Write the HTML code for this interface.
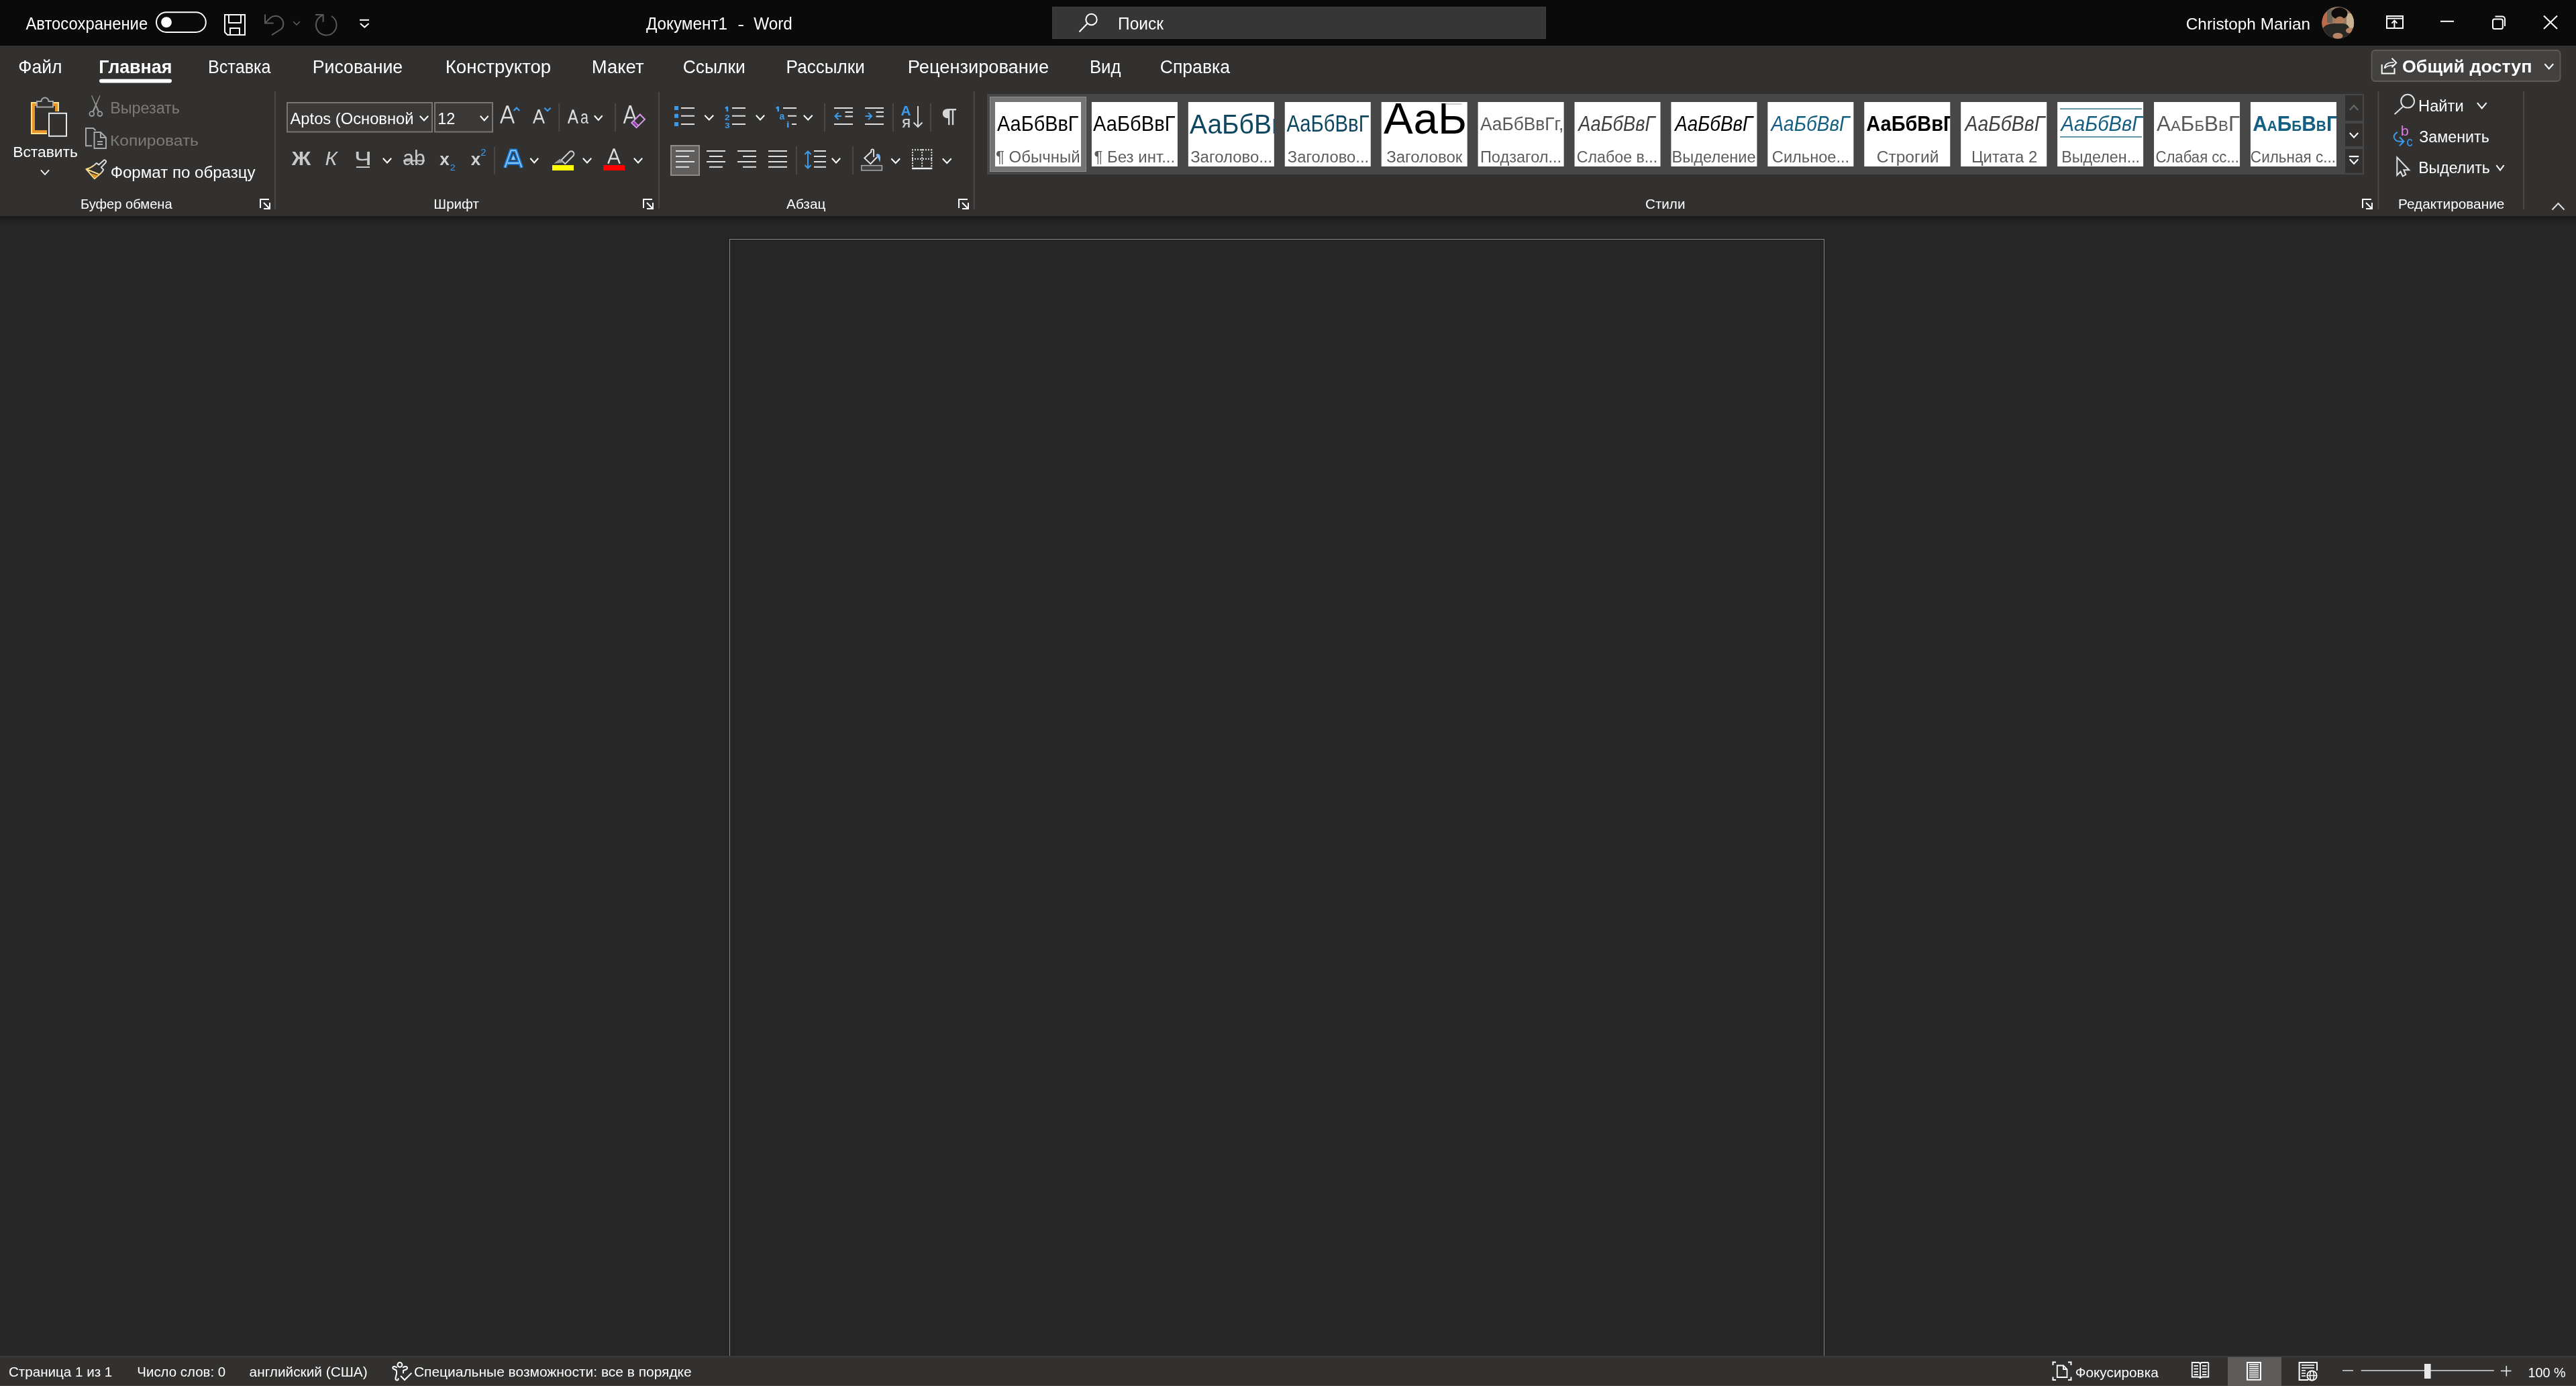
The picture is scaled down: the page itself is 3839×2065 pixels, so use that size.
<!DOCTYPE html>
<html><head><meta charset="utf-8"><title>Документ1 - Word</title>
<style>
html,body{margin:0;padding:0;width:3839px;height:2065px;overflow:hidden;background:#262626;}
svg{display:block;font-family:"Liberation Sans",sans-serif;will-change:transform;}
</style></head><body>
<svg width="3839" height="2065" viewBox="0 0 3839 2065">
<rect x="0" y="0" width="3839" height="2065" fill="#262626" />
<rect x="0" y="0" width="3839" height="68" fill="#0a0a0a" />
<rect x="0" y="68" width="3839" height="254" fill="#323130" />
<defs><linearGradient id="sh" x1="0" y1="0" x2="0" y2="1"><stop offset="0" stop-color="#191919"/><stop offset="1" stop-color="#262626" stop-opacity="0"/></linearGradient></defs>
<rect x="0" y="322" width="3839" height="1" fill="#181818" />
<rect x="0" y="323" width="3839" height="1" fill="#1a1a1a" />
<rect x="0" y="324" width="3839" height="1" fill="#1c1c1c" />
<rect x="0" y="325" width="3839" height="1" fill="#1e1e1e" />
<rect x="0" y="326" width="3839" height="1" fill="#1f1f1f" />
<rect x="0" y="327" width="3839" height="1" fill="#202020" />
<rect x="0" y="328" width="3839" height="1" fill="#212121" />
<rect x="0" y="329" width="3839" height="1" fill="#222222" />
<rect x="0" y="330" width="3839" height="1" fill="#232323" />
<rect x="0" y="331" width="3839" height="1" fill="#232323" />
<rect x="0" y="332" width="3839" height="1" fill="#242424" />
<rect x="0" y="333" width="3839" height="1" fill="#252525" />
<rect x="0" y="334" width="3839" height="1" fill="#252525" />
<rect x="1087.5" y="356.5" width="1631" height="1700" fill="none" stroke="#8c8c8c" stroke-width="1"/>
<rect x="1086.5" y="355.5" width="1633" height="1700" fill="none" stroke="#1e1e1e" stroke-width="1"/>
<rect x="1088.5" y="357.5" width="1629" height="1700" fill="none" stroke="#202020" stroke-width="1"/>
<rect x="0" y="2020" width="3839" height="45" fill="#323130" />
<text transform="translate(38.40,43.60) scale(0.9482,1)" font-size="25.15" fill="#fff" >Автосохранение</text>
<rect x="233" y="18.3" width="73.8" height="29.7" rx="14.85" fill="none" stroke="#fff" stroke-width="2"/>
<circle cx="248" cy="33.1" r="7.9" fill="#fff"/>
<path d="M335 22 H365 V52 H339 L335 48 Z" stroke="#ffffff" stroke-width="2" fill="none" />
<path d="M341 22 V34 H359 V22" stroke="#ffffff" stroke-width="2" fill="none" />
<path d="M343 52 V42 H357 V52" stroke="#ffffff" stroke-width="2" fill="none" />
<path d="M395 21.5 V34.4 H407.7" stroke="#5a5a5a" stroke-width="2" fill="none" />
<path d="M395.5 34 L403 26.5 A 11.7 11.7 0 0 1 419.5 43 L405 52.2" stroke="#5a5a5a" stroke-width="2" fill="none" />
<path d="M437 32 L442 37 L447 32" stroke="#5a5a5a" stroke-width="1.6" fill="none" />
<path d="M470 22 H481.6 V32.7" stroke="#5a5a5a" stroke-width="2" fill="none" />
<path d="M494 24 A 15.3 15.3 0 1 1 480.5 23" stroke="#5a5a5a" stroke-width="2" fill="none" />
<path d="M536 29.8 H550" stroke="#ffffff" stroke-width="2" fill="none" />
<path d="M537 35 L543.3 40.6 L549.6 35" stroke="#ffffff" stroke-width="2" fill="none" />
<text transform="translate(962.88,44.40) scale(0.9717,1)" font-size="25.00" fill="#fff" >Документ1</text>
<rect x="1100.6" y="37" width="7.2" height="2" fill="#fff" />
<text transform="translate(1123.18,44.40) scale(0.9722,1)" font-size="25.00" fill="#fff" >Word</text>
<rect x="1568.5" y="10.5" width="735" height="47" fill="#363636" stroke="#3f3f3f" stroke-width="1"/>
<circle cx="1626.5" cy="29" r="8.2" fill="none" stroke="#fff" stroke-width="2"/>
<path d="M1620.5 35 L1608.5 47.5" stroke="#ffffff" stroke-width="2" fill="none" />
<text transform="translate(1666.04,43.50) scale(0.9853,1)" font-size="24.85" fill="#fff" >Поиск</text>
<text transform="translate(3257.78,44.00) scale(0.9848,1)" font-size="24.71" fill="#fff" >Christoph Marian</text>
<defs><clipPath id="avc"><circle cx="3484.25" cy="33.95" r="23.9"/></clipPath></defs>
<g clip-path="url(#avc)">
<rect x="3460" y="9" width="49" height="50" fill="#9a7a60" />
<rect x="3460" y="9" width="12" height="50" fill="#c06a4a"/>
<rect x="3497" y="20" width="13" height="22" fill="#c8b090"/>
<rect x="3468" y="14" width="8" height="20" fill="#6a6456"/>
<ellipse cx="3486.5" cy="20" rx="12" ry="9" fill="#0e0c0b"/>
<ellipse cx="3487" cy="31" rx="7" ry="6.5" fill="#b27c5c"/>
<path d="M3460 44 Q3466 35 3478 35 H3493 Q3500 36 3502 44 V60 H3460 Z" fill="#282925"/>
<ellipse cx="3484" cy="53.5" rx="7.5" ry="4.5" fill="#b88464"/>
<ellipse cx="3501" cy="45.5" rx="5" ry="4" fill="#b88464"/>
</g>
<path d="M3557 24 H3581 V42 H3557 Z" stroke="#ffffff" stroke-width="2" fill="none" />
<path d="M3557 27.5 H3581" stroke="#ffffff" stroke-width="2" fill="none" />
<path d="M3568.4 30.5 V42" stroke="#ffffff" stroke-width="2" fill="none" />
<path d="M3564.4 34.6 L3568.4 30.6 L3572.4 34.6" stroke="#ffffff" stroke-width="2" fill="none" />
<path d="M3637 31.8 H3657" stroke="#ffffff" stroke-width="2" fill="none" />
<rect x="3715" y="28.4" width="14.8" height="14.6" rx="2.5" fill="none" stroke="#fff" stroke-width="2"/>
<path d="M3718.5 24.5 H3729 A4 4 0 0 1 3733 28.5 V39" stroke="#ffffff" stroke-width="2" fill="none" />
<path d="M3791 23.5 L3811 43 M3811 23.5 L3791 43" stroke="#ffffff" stroke-width="2" fill="none" />
<text transform="translate(27.24,109.00) scale(0.9599,1)" font-size="27.62" fill="#fff" >Файл</text>
<text transform="translate(147.26,109.00) scale(0.9717,1)" font-size="27.62" fill="#fff" font-weight="bold" >Главная</text>
<rect x="148" y="117.8" width="108" height="5.6" rx="2.8" fill="#fff"/>
<text transform="translate(309.98,109.00) scale(0.9125,1)" font-size="27.62" fill="#fff" >Вставка</text>
<text transform="translate(465.66,109.00) scale(0.9676,1)" font-size="27.62" fill="#fff" >Рисование</text>
<text transform="translate(663.79,109.00) scale(0.9994,1)" font-size="27.62" fill="#fff" >Конструктор</text>
<text transform="translate(881.80,109.00) scale(0.9948,1)" font-size="27.62" fill="#fff" >Макет</text>
<text transform="translate(1017.68,109.00) scale(0.9585,1)" font-size="27.62" fill="#fff" >Ссылки</text>
<text transform="translate(1171.61,109.00) scale(0.9453,1)" font-size="27.62" fill="#fff" >Рассылки</text>
<text transform="translate(1352.82,109.00) scale(0.9869,1)" font-size="27.62" fill="#fff" >Рецензирование</text>
<text transform="translate(1623.94,109.00) scale(0.9317,1)" font-size="27.62" fill="#fff" >Вид</text>
<text transform="translate(1728.67,109.00) scale(0.9637,1)" font-size="27.62" fill="#fff" >Справка</text>
<path d="M46 152 H88 V166 H82 V158 H52 V194 H70 V200 H46 Z" fill="#ffe08a"/>
<path d="M48 154 H86 V166 H82 V158 H52 V194 H70 V198 H48 Z" fill="#e8952a"/>
<path d="M55 159.5 V151 H61.5 A5.5 5.5 0 0 1 72.5 151 H79 V159.5 Z" stroke="#a8a8a8" stroke-width="2" fill="#323130" />
<rect x="73" y="168.8" width="26" height="34" fill="#323130" stroke="#e8e8e8" stroke-width="2"/>
<text transform="translate(19.17,233.50) scale(0.9935,1)" font-size="22.97" fill="#fff" >Вставить</text>
<path d="M61.5 254 L67.0 260 L72.5 254" stroke="#fff" stroke-width="1.8" fill="none" stroke-linecap="square"/>
<path d="M136.6 142.3 L147.6 165.5 L146 166.3 Z M149 142.3 L138 165.5 L139.6 166.3 Z" fill="#9a9a9a" stroke="#9a9a9a" stroke-width="0.8" stroke-linejoin="round"/>
<circle cx="136.8" cy="169.6" r="3.4" fill="none" stroke="#9a9a9a" stroke-width="1.8"/>
<circle cx="148.9" cy="169.6" r="3.4" fill="none" stroke="#9a9a9a" stroke-width="1.8"/>
<text transform="translate(164.13,169.00) scale(0.9918,1)" font-size="23.55" fill="#7c7b7a" >Вырезать</text>
<path d="M137 217.3 H128 V191 H139 L142.5 194.5" stroke="#a8a8a8" stroke-width="2" fill="none" />
<path d="M140.5 221 V197 H150 L158 205 V221 Z M150 197 V205 H158" stroke="#a8a8a8" stroke-width="2" fill="none" />
<path d="M145 211 H153 M145 215 H153" stroke="#a8a8a8" stroke-width="1.8" fill="none" />
<text transform="translate(164.04,216.70) scale(1.0737,1)" font-size="22.82" fill="#7c7b7a" >Копировать</text>
<path d="M140.6 246 L143.2 243.4 Q143.8 242.9 144.4 243.4 L147.2 245.4 L154.6 238.9 Q156.2 237.6 157.6 239.4 Q158.6 240.9 157.5 242.2 L150.8 249.4 L153.8 252.4 Q154.3 253 153.8 253.6 L151.5 256.9" stroke="#dcdcdc" stroke-width="2" fill="none" stroke-linejoin="round"/>
<path d="M151.5 256.9 L140.9 266.3 L128.4 251.9 Q134.5 250.8 140.6 246 M128.4 251.9 L147 259.5" stroke="#f7dc8c" stroke-width="2" fill="none" stroke-linejoin="round"/>
<path d="M135.5 258 L146.3 261.4 L141 265.2 Z" fill="#e3901f"/>
<text transform="translate(164.67,265.00) scale(0.9752,1)" font-size="24.71" fill="#fff" >Формат по образцу</text>
<text transform="translate(119.89,311.00) scale(0.9762,1)" font-size="20.64" fill="#fff" >Буфер обмена</text>
<path d="M388 310 V297 H401 M393 302 L401.5 310.5 M402 302 V311 H393" stroke="#fff" stroke-width="2" fill="none" />
<rect x="409.0" y="136.5" width="2" height="175.0" fill="#4a4846" />
<rect x="428" y="153" width="216" height="43.5" fill="#3a3938" stroke="#777675" stroke-width="2"/>
<text transform="translate(432.50,184.70) scale(0.9962,1)" font-size="23.84" fill="#fff" >Aptos (Основной</text>
<path d="M626.5 173.5 L632.0 179.5 L637.5 173.5" stroke="#fff" stroke-width="2" fill="none" stroke-linecap="square"/>
<rect x="648" y="153" width="86" height="43.5" fill="#3a3938" stroke="#777675" stroke-width="2"/>
<text transform="translate(652.14,184.70) scale(0.9838,1)" font-size="23.84" fill="#fff" >12</text>
<path d="M716.5 173.5 L721.75 179.5 L727 173.5" stroke="#fff" stroke-width="2" fill="none" stroke-linecap="square"/>
<path d="M746.3 183.8 L755.5 158.5 H756.8 L765.7 183.8 M749.5 175.2 H762.5" stroke="#dcdcdc" stroke-width="2.6" fill="none" />
<path d="M765.5 165 L769.9 160.6 L774.3 165" stroke="#3d9be9" stroke-width="2.2" fill="none" />
<path d="M795.2 183.8 L802.5 164.3 H803.5 L810.8 183.8 M797.8 177 H808.2" stroke="#dcdcdc" stroke-width="2.4" fill="none" />
<path d="M811.4 160.7 L816 165.3 L820.6 160.7" stroke="#3d9be9" stroke-width="2.2" fill="none" />
<rect x="832.3" y="154" width="2" height="42" fill="#4a4846" />
<path d="M847 183.8 L853.5 164.5 H854.3 L860.8 183.8 M849.3 177 H858.5" stroke="#dcdcdc" stroke-width="2.4" fill="none" />
<text transform="translate(865.04,184.00) scale(0.7838,1)" font-size="27.50" fill="#dcdcdc" >a</text>
<path d="M886.5 173 L891.75 179 L897 173" stroke="#fff" stroke-width="2" fill="none" stroke-linecap="square"/>
<rect x="916.0" y="154" width="2" height="42" fill="#4a4846" />
<path d="M930 183.8 L938.5 158.3 H939.8 L946.5 178 M933 175.2 H943" stroke="#dcdcdc" stroke-width="2.6" fill="none" />
<path d="M941.3 183 L953.8 170.5 L961 177.7 L948.5 190.2 Z" fill="none" stroke="#d89ae6" stroke-width="2"/>
<path d="M944.2 180.3 L951.3 187.4" stroke="#d89ae6" stroke-width="2"/>
<path d="M942.8 183 L944.8 181 L949.8 186 L947.8 188 Z" fill="#9b3fbf"/>
<rect x="981.0" y="136.8" width="2" height="174.2" fill="#4a4846" />
<text transform="translate(434.80,246.40) scale(1.0446,1)" font-size="30.09" fill="#c8c8c8" font-weight="bold" >Ж</text>
<text transform="translate(484.48,246.40) scale(1.0218,1)" font-size="30.09" fill="#c8c8c8" font-style="italic" >К</text>
<text transform="translate(527.83,246.40) scale(1.3163,1)" font-size="30.09" fill="#c8c8c8" >Ч</text>
<rect x="531" y="248" width="20" height="2" fill="#c8c8c8" />
<path d="M571.5 236.5 L577.0 242.5 L582.5 236.5" stroke="#fff" stroke-width="2" fill="none" stroke-linecap="square"/>
<text transform="translate(600.30,246.40) scale(0.9631,1)" font-size="31.25" fill="#c8c8c8" >ab</text>
<rect x="601" y="238.5" width="32" height="2" fill="#c8c8c8" />
<text transform="translate(655.14,246.40) scale(1.0444,1)" font-size="25.00" fill="#d0d0d0" font-weight="bold" >x</text>
<text transform="translate(670.79,253.80) scale(1.0683,1)" font-size="13.37" fill="#3d9be9" >2</text>
<text transform="translate(701.74,246.40) scale(1.0370,1)" font-size="25.00" fill="#d0d0d0" font-weight="bold" >x</text>
<text transform="translate(716.26,232.30) scale(1.0338,1)" font-size="14.24" fill="#3d9be9" >2</text>
<rect x="736.0" y="219" width="2" height="40.5" fill="#4a4846" />
<path d="M752.5 249.8 L761.5 224.2 H768.5 L777.5 249.8 M756.5 243 H773.5" stroke="#1a78d0" stroke-width="5.5" fill="none" stroke-linejoin="miter"/>
<path d="M752.5 249.8 L761.5 224.2 H768.5 L777.5 249.8 M756.5 243 H773.5" stroke="#8cc8f5" stroke-width="1.8" fill="none" stroke-linejoin="miter"/>
<path d="M765 229.5 L768.8 238.5 H761.2 Z" fill="#8cc8f5" stroke="#1a78d0" stroke-width="1.2"/>
<path d="M791 236.5 L796.25 242.5 L801.5 236.5" stroke="#fff" stroke-width="2" fill="none" stroke-linecap="square"/>
<path d="M836.5 238.5 L848.5 226.5 A4 4 0 0 1 854.2 232.2 L842.2 244.2 Z" stroke="#d0d0d0" stroke-width="2" fill="none" />
<path d="M825.3 243.8 L834.5 236.5 L840 242 Z" fill="#9a9a9a"/>
<rect x="823" y="246" width="32" height="8" fill="#ffff00" />
<path d="M869.5 236.5 L875.0 242.5 L880.5 236.5" stroke="#fff" stroke-width="2" fill="none" stroke-linecap="square"/>
<path d="M906.3 243.7 L914.5 222.5 H915.5 L923.7 243.7 M909 236.5 H921" stroke="#dcdcdc" stroke-width="2.4" fill="none" />
<rect x="899" y="246" width="32" height="8" fill="#ff0000" />
<path d="M945.5 236.5 L951.0 242.5 L956.5 236.5" stroke="#fff" stroke-width="2" fill="none" stroke-linecap="square"/>
<text transform="translate(646.36,311.00) scale(0.9810,1)" font-size="20.93" fill="#fff" >Шрифт</text>
<path d="M959 310 V297 H972 M964 302 L972.5 310.5 M973 302 V311 H964" stroke="#fff" stroke-width="2" fill="none" />
<rect x="1005" y="158" width="6" height="6" fill="#3d9be9" />
<rect x="1015" y="160" width="20" height="2" fill="#e0e0e0" />
<rect x="1091" y="160" width="20" height="2" fill="#e0e0e0" />
<rect x="1005" y="169.7" width="6" height="6" fill="#3d9be9" />
<rect x="1015" y="171.7" width="20" height="2" fill="#e0e0e0" />
<rect x="1091" y="171.7" width="20" height="2" fill="#e0e0e0" />
<rect x="1005" y="182" width="6" height="6" fill="#3d9be9" />
<rect x="1015" y="184" width="20" height="2" fill="#e0e0e0" />
<rect x="1091" y="184" width="20" height="2" fill="#e0e0e0" />
<path d="M1051 172.5 L1056.75 178.5 L1062.5 172.5" stroke="#fff" stroke-width="2" fill="none" stroke-linecap="square"/>
<path d="M1083.9 166.2 V159.2 M1084.6 159 L1080.9 161.4" stroke="#3d9be9" stroke-width="2.6" fill="none" />
<text transform="translate(1080.03,178.50) scale(1.2940,1)" font-size="10.47" fill="#3d9be9" font-weight="bold" >2</text>
<text transform="translate(1080.17,190.50) scale(1.2548,1)" font-size="10.47" fill="#3d9be9" font-weight="bold" >3</text>
<path d="M1127.5 172.5 L1133.0 178.5 L1138.5 172.5" stroke="#fff" stroke-width="2" fill="none" stroke-linecap="square"/>
<rect x="1167" y="160" width="20" height="2" fill="#e0e0e0" />
<rect x="1174" y="171.7" width="13" height="2" fill="#e0e0e0" />
<rect x="1180" y="184" width="7" height="2" fill="#e0e0e0" />
<path d="M1159.7 166.2 V159.2 M1160.4 159 L1156.7 161.4" stroke="#3d9be9" stroke-width="2.6" fill="none" />
<text transform="translate(1161.58,177.80) scale(0.9186,1)" font-size="15.26" fill="#3d9be9" font-weight="bold" >a</text>
<text transform="translate(1171.75,189.80) scale(1.3651,1)" font-size="13.08" fill="#3d9be9" font-weight="bold" >i</text>
<path d="M1198.5 172.5 L1204.25 178.5 L1210 172.5" stroke="#fff" stroke-width="2" fill="none" stroke-linecap="square"/>
<rect x="1228.0" y="154" width="2" height="42" fill="#4a4846" />
<rect x="1243" y="160" width="28" height="2" fill="#e0e0e0" />
<rect x="1259.5" y="166" width="11.5" height="2" fill="#e0e0e0" />
<rect x="1259.5" y="172.5" width="11.5" height="2" fill="#e0e0e0" />
<rect x="1243" y="184" width="28" height="2" fill="#e0e0e0" />
<path d="M1254 173 H1244.5 M1249.5 168 L1244.5 173 L1249.5 178" stroke="#3d9be9" stroke-width="2" fill="none" />
<rect x="1289" y="160" width="28" height="2" fill="#e0e0e0" />
<rect x="1305.5" y="166" width="11.5" height="2" fill="#e0e0e0" />
<rect x="1305.5" y="172.5" width="11.5" height="2" fill="#e0e0e0" />
<rect x="1289" y="184" width="28" height="2" fill="#e0e0e0" />
<path d="M1289.5 173 H1299 M1294 168 L1299 173 L1294 178" stroke="#3d9be9" stroke-width="2" fill="none" />
<rect x="1330.0" y="154" width="2" height="42" fill="#4a4846" />
<text transform="translate(1342.48,171.70) scale(1.0494,1)" font-size="19.91" fill="#3d9be9" font-weight="bold" >A</text>
<text transform="translate(1344.15,189.80) scale(0.9183,1)" font-size="19.19" fill="#c8c8c8" font-weight="bold" >Я</text>
<path d="M1368 158 V189 M1361.5 182.5 L1368 189 L1374.5 182.5" stroke="#d8d8d8" stroke-width="2" fill="none" />
<rect x="1386.0" y="154" width="2" height="42" fill="#4a4846" />
<path d="M1413.5 162 H1425 V164.6 H1421.2 V186.2 H1418.8 V164.6 H1415.4 V186.2 H1413 V176.3 Q1404.8 176 1404.8 169 Q1404.8 162 1413.5 162 Z" fill="#d6d6d6"/>
<rect x="1000" y="217" width="42" height="44" fill="#5f5e5d" stroke="#8e8d8c" stroke-width="2"/>
<rect x="1007" y="224" width="28" height="2" fill="#e0e0e0" />
<rect x="1007" y="232" width="20" height="2" fill="#e0e0e0" />
<rect x="1007" y="240" width="28" height="2" fill="#e0e0e0" />
<rect x="1007" y="247.8" width="20" height="2" fill="#e0e0e0" />
<rect x="1053" y="224" width="28" height="2" fill="#e0e0e0" />
<rect x="1057" y="232" width="20" height="2" fill="#e0e0e0" />
<rect x="1053" y="240" width="28" height="2" fill="#e0e0e0" />
<rect x="1057" y="247.8" width="20" height="2" fill="#e0e0e0" />
<rect x="1099" y="224" width="28" height="2" fill="#e0e0e0" />
<rect x="1107" y="232" width="20" height="2" fill="#e0e0e0" />
<rect x="1099" y="240" width="28" height="2" fill="#e0e0e0" />
<rect x="1107" y="247.8" width="20" height="2" fill="#e0e0e0" />
<rect x="1145" y="224" width="28" height="2" fill="#e0e0e0" />
<rect x="1145" y="232" width="28" height="2" fill="#e0e0e0" />
<rect x="1145" y="240" width="28" height="2" fill="#e0e0e0" />
<rect x="1145" y="247.8" width="28" height="2" fill="#e0e0e0" />
<rect x="1186.0" y="218" width="2" height="42" fill="#4a4846" />
<path d="M1204 226 V250 M1199.5 230 L1204 225.5 L1208.5 230 M1199.5 246 L1204 250.5 L1208.5 246" stroke="#3d9be9" stroke-width="2" fill="none" />
<rect x="1213" y="224" width="18" height="2" fill="#e0e0e0" />
<rect x="1213" y="232" width="18" height="2" fill="#e0e0e0" />
<rect x="1213" y="240" width="18" height="2" fill="#e0e0e0" />
<rect x="1213" y="247.8" width="18" height="2" fill="#e0e0e0" />
<path d="M1240.5 236.5 L1246.0 242.5 L1251.5 236.5" stroke="#fff" stroke-width="2" fill="none" stroke-linecap="square"/>
<rect x="1270.0" y="218" width="2" height="42" fill="#4a4846" />
<path d="M1298.3 226.3 L1288.3 235.6 L1297.4 244.2 L1307.2 234" stroke="#e6e6e6" stroke-width="1.9" fill="none" />
<path d="M1298.3 226.5 V224.3 A1.9 1.9 0 0 1 1302.1 224.3 V233.2" stroke="#e6e6e6" stroke-width="1.9" fill="none" stroke-linecap="round"/>
<path d="M1305.3 230.5 Q1308 228.2 1310.8 230.5 Q1313 233 1311.2 242.3 Q1309.5 236 1307 233.5 Z" fill="#7cbcf0"/>
<rect x="1283.8" y="246.6" width="30.6" height="7.2" fill="#404040" stroke="#b0b0b0" stroke-width="1.4"/>
<path d="M1329 237 L1334.75 243 L1340.5 237" stroke="#fff" stroke-width="2" fill="none" stroke-linecap="square"/>
<path d="M1359.0 222.3h1.9v1.9h-1.9z M1363.0 222.3h1.9v1.9h-1.9z M1367.0 222.3h1.9v1.9h-1.9z M1371.0 222.3h1.9v1.9h-1.9z M1375.0 222.3h1.9v1.9h-1.9z M1379.0 222.3h1.9v1.9h-1.9z M1383.0 222.3h1.9v1.9h-1.9z M1387.0 222.3h1.9v1.9h-1.9z M1359.0 235.8h1.9v1.9h-1.9z M1363.0 235.8h1.9v1.9h-1.9z M1367.0 235.8h1.9v1.9h-1.9z M1371.0 235.8h1.9v1.9h-1.9z M1375.0 235.8h1.9v1.9h-1.9z M1379.0 235.8h1.9v1.9h-1.9z M1383.0 235.8h1.9v1.9h-1.9z M1387.0 235.8h1.9v1.9h-1.9z M1359.0 222.3h1.9v1.9h-1.9z M1359.0 226.3h1.9v1.9h-1.9z M1359.0 230.3h1.9v1.9h-1.9z M1359.0 234.3h1.9v1.9h-1.9z M1359.0 238.3h1.9v1.9h-1.9z M1359.0 242.3h1.9v1.9h-1.9z M1359.0 246.3h1.9v1.9h-1.9z M1373.2 222.3h1.9v1.9h-1.9z M1373.2 226.3h1.9v1.9h-1.9z M1373.2 230.3h1.9v1.9h-1.9z M1373.2 234.3h1.9v1.9h-1.9z M1373.2 238.3h1.9v1.9h-1.9z M1373.2 242.3h1.9v1.9h-1.9z M1373.2 246.3h1.9v1.9h-1.9z M1387.4 222.3h1.9v1.9h-1.9z M1387.4 226.3h1.9v1.9h-1.9z M1387.4 230.3h1.9v1.9h-1.9z M1387.4 234.3h1.9v1.9h-1.9z M1387.4 238.3h1.9v1.9h-1.9z M1387.4 242.3h1.9v1.9h-1.9z M1387.4 246.3h1.9v1.9h-1.9z" fill="#f0f0f0"/>
<rect x="1359" y="249.8" width="30.3" height="2.4" fill="#f4f4f4" />
<path d="M1405.5 237 L1411.25 243 L1417 237" stroke="#fff" stroke-width="2" fill="none" stroke-linecap="square"/>
<text transform="translate(1172.00,311.00) scale(0.9882,1)" font-size="21.08" fill="#fff" >Абзац</text>
<path d="M1429 310 V297 H1442 M1434 302 L1442.5 310.5 M1443 302 V311 H1434" stroke="#fff" stroke-width="2" fill="none" />
<rect x="1450.7" y="136" width="2" height="175.5" fill="#4a4846" />
<rect x="3543.5" y="136" width="2" height="176" fill="#4a4846" />
<circle cx="3588.1" cy="150.7" r="9.9" fill="none" stroke="#e0e0e0" stroke-width="2"/>
<path d="M3581 159 L3568.6 170.2" stroke="#e0e0e0" stroke-width="2" fill="none" />
<text transform="translate(3604.11,166.00) scale(1.0174,1)" font-size="23.26" fill="#fff" >Найти</text>
<path d="M3692.5 154 L3698.75 161.5 L3705 154" stroke="#fff" stroke-width="2" fill="none" stroke-linecap="square"/>
<text transform="translate(3577.78,201.80) scale(1.0333,1)" font-size="21.08" fill="#dc78e0" >b</text>
<text transform="translate(3586.46,217.70) scale(0.8726,1)" font-size="21.08" fill="#3d9be9" >c</text>
<path d="M3573 196.8 Q3566.5 200.5 3568 205.5 Q3570 210.7 3576 210.7 H3582 M3576 204.3 L3582.5 210.7 L3576 217.3" stroke="#3d9be9" stroke-width="2" fill="none" />
<text transform="translate(3605.18,212.00) scale(0.9836,1)" font-size="23.69" fill="#fff" >Заменить</text>
<path d="M3572.3 234.5 V261 L3577.6 255.5 L3580.8 262.5 L3585.3 260 L3582.3 253.2 H3590.3 Z" stroke="#e0e0e0" stroke-width="2" fill="none" stroke-linejoin="miter"/>
<text transform="translate(3604.15,258.00) scale(0.9777,1)" font-size="23.69" fill="#fff" >Выделить</text>
<path d="M3721 247 L3726.0 253.5 L3731 247" stroke="#fff" stroke-width="2" fill="none" stroke-linecap="square"/>
<text transform="translate(3574.04,310.60) scale(0.9863,1)" font-size="21.08" fill="#fff" >Редактирование</text>
<rect x="3760.0" y="136" width="2" height="176" fill="#4a4846" />
<path d="M3803.5 312.5 L3812.5 303 L3821.5 312.5" stroke="#e0e0e0" stroke-width="2" fill="none" />
<rect x="3534.5" y="75" width="281" height="46" rx="5" fill="#434241" stroke="#5c5b5a" stroke-width="1.8"/>
<path d="M3549.7 96 V109.5 H3568.5 V101.5" stroke="#fff" stroke-width="2" fill="none" />
<path d="M3553.5 101.8 Q3554.5 95 3561 93.5 Q3564 92.8 3567.5 93 M3553.5 101.8 Q3557 97.5 3567.5 97.3" stroke="#fff" stroke-width="1.6" fill="none" />
<path d="M3564.5 86.8 L3571.2 93.6 L3564.5 100.3" stroke="#fff" stroke-width="2" fill="none" />
<text transform="translate(3579.93,108.00) scale(1.0093,1)" font-size="26.60" fill="#fff" font-weight="bold" >Общий доступ</text>
<path d="M3793 96 L3798.75 102.5 L3804.5 96" stroke="#fff" stroke-width="2" fill="none" stroke-linecap="square"/>
<rect x="1471" y="140" width="2052" height="120" fill="#474747" />
<rect x="1475.5" y="144.5" width="143" height="111" fill="#747474" stroke="#8e8e8e" stroke-width="1"/>
<defs>
<clipPath id="tc0"><rect x="1483.00" y="152" width="128" height="96"/></clipPath>
<clipPath id="tc1"><rect x="1626.92" y="152" width="128" height="96"/></clipPath>
<clipPath id="tc2"><rect x="1770.84" y="152" width="128" height="96"/></clipPath>
<clipPath id="tc3"><rect x="1914.76" y="152" width="128" height="96"/></clipPath>
<clipPath id="tc4"><rect x="2058.68" y="152" width="128" height="96"/></clipPath>
<clipPath id="tc5"><rect x="2202.60" y="152" width="128" height="96"/></clipPath>
<clipPath id="tc6"><rect x="2346.52" y="152" width="128" height="96"/></clipPath>
<clipPath id="tc7"><rect x="2490.44" y="152" width="128" height="96"/></clipPath>
<clipPath id="tc8"><rect x="2634.36" y="152" width="128" height="96"/></clipPath>
<clipPath id="tc9"><rect x="2778.28" y="152" width="128" height="96"/></clipPath>
<clipPath id="tc10"><rect x="2922.20" y="152" width="128" height="96"/></clipPath>
<clipPath id="tc11"><rect x="3066.12" y="152" width="128" height="96"/></clipPath>
<clipPath id="tc12"><rect x="3210.04" y="152" width="128" height="96"/></clipPath>
<clipPath id="tc13"><rect x="3353.96" y="152" width="128" height="96"/></clipPath>
</defs>
<rect x="1483.00" y="152" width="128" height="96" fill="#ffffff" />
<rect x="1626.92" y="152" width="128" height="96" fill="#ffffff" />
<rect x="1770.84" y="152" width="128" height="96" fill="#ffffff" />
<rect x="1914.76" y="152" width="128" height="96" fill="#ffffff" />
<rect x="2058.68" y="152" width="128" height="96" fill="#ffffff" />
<rect x="2202.60" y="152" width="128" height="96" fill="#ffffff" />
<rect x="2346.52" y="152" width="128" height="96" fill="#ffffff" />
<rect x="2490.44" y="152" width="128" height="96" fill="#ffffff" />
<rect x="2634.36" y="152" width="128" height="96" fill="#ffffff" />
<rect x="2778.28" y="152" width="128" height="96" fill="#ffffff" />
<rect x="2922.20" y="152" width="128" height="96" fill="#ffffff" />
<rect x="3066.12" y="152" width="128" height="96" fill="#ffffff" />
<rect x="3210.04" y="152" width="128" height="96" fill="#ffffff" />
<rect x="3353.96" y="152" width="128" height="96" fill="#ffffff" />
<g clip-path="url(#tc0)">
<text transform="translate(1484.04,242.00) scale(1.0007,1)" font-size="23.98" fill="#5c5c5c" >¶ Обычный</text>
</g>
<g clip-path="url(#tc1)">
<text transform="translate(1630.54,242.00) scale(0.9999,1)" font-size="23.98" fill="#5c5c5c" >¶ Без инт...</text>
</g>
<g clip-path="url(#tc2)">
<text transform="translate(1774.16,242.00) scale(0.9984,1)" font-size="23.98" fill="#5c5c5c" >Заголово...</text>
</g>
<g clip-path="url(#tc3)">
<text transform="translate(1918.87,242.00) scale(0.9925,1)" font-size="23.98" fill="#5c5c5c" >Заголово...</text>
</g>
<g clip-path="url(#tc4)">
<text transform="translate(2066.16,242.00) scale(1.0045,1)" font-size="23.98" fill="#5c5c5c" >Заголовок</text>
</g>
<g clip-path="url(#tc5)">
<text transform="translate(2205.91,242.00) scale(0.9833,1)" font-size="23.98" fill="#5c5c5c" >Подзагол...</text>
</g>
<g clip-path="url(#tc6)">
<text transform="translate(2349.84,242.00) scale(0.9670,1)" font-size="23.98" fill="#5c5c5c" >Слабое в...</text>
</g>
<g clip-path="url(#tc7)">
<text transform="translate(2491.61,242.00) scale(0.9846,1)" font-size="23.98" fill="#5c5c5c" >Выделение</text>
</g>
<g clip-path="url(#tc8)">
<text transform="translate(2640.82,242.00) scale(0.9852,1)" font-size="23.98" fill="#5c5c5c" >Сильное...</text>
</g>
<g clip-path="url(#tc9)">
<text transform="translate(2796.77,242.00) scale(1.0233,1)" font-size="23.98" fill="#5c5c5c" >Строгий</text>
</g>
<g clip-path="url(#tc10)">
<text transform="translate(2937.89,242.00) scale(0.9961,1)" font-size="23.98" fill="#5c5c5c" >Цитата 2</text>
</g>
<g clip-path="url(#tc11)">
<text transform="translate(3072.13,242.00) scale(0.9725,1)" font-size="23.98" fill="#5c5c5c" >Выделен...</text>
</g>
<g clip-path="url(#tc12)">
<text transform="translate(3212.39,242.00) scale(0.9245,1)" font-size="23.98" fill="#5c5c5c" >Слабая сс...</text>
</g>
<g clip-path="url(#tc13)">
<text transform="translate(3353.87,242.00) scale(0.9392,1)" font-size="23.98" fill="#5c5c5c" >Сильная с...</text>
</g>
<g clip-path="url(#tc0)">
<text transform="translate(1486.00,195.00) scale(0.9472,1)" font-size="30.52" fill="#000" >АаБбВвГ</text>
</g>
<g clip-path="url(#tc1)">
<text transform="translate(1629.00,195.00) scale(0.9551,1)" font-size="30.52" fill="#000" >АаБбВвГ</text>
</g>
<g clip-path="url(#tc2)">
<text transform="translate(1773.00,199.00) scale(0.9405,1)" font-size="41.42" fill="#0f4761" >АаБбВвГ</text>
</g>
<g clip-path="url(#tc3)">
<text transform="translate(1917.50,196.00) scale(0.8570,1)" font-size="34.16" fill="#0f4761" >АаБбВвГ</text>
</g>
<g clip-path="url(#tc4)">
<text transform="translate(2062.00,199.00) scale(1.0266,1)" font-size="63.95" fill="#000" >АаЬ</text>
</g>
<rect x="2153.6" y="154.5" width="25" height="1" fill="#9a9a9a"/>
<g clip-path="url(#tc5)">
<text transform="translate(2206.00,194.20) scale(0.9239,1)" font-size="28.49" fill="#595959" >АаБбВвГг,</text>
</g>
<g clip-path="url(#tc6)">
<text transform="translate(2352.37,195.00) scale(0.8956,1)" font-size="30.52" fill="#404040" font-style="italic" >АаБбВвГ</text>
</g>
<g clip-path="url(#tc7)">
<text transform="translate(2496.19,195.00) scale(0.9124,1)" font-size="30.52" fill="#000" font-style="italic" >АаБбВвГ</text>
</g>
<g clip-path="url(#tc8)">
<text transform="translate(2639.40,195.00) scale(0.9186,1)" font-size="30.52" fill="#156082" font-style="italic" >АаБбВвГ</text>
</g>
<g clip-path="url(#tc9)">
<text transform="translate(2781.28,195.00) scale(0.9486,1)" font-size="30.52" fill="#000" font-weight="bold" >АаБбВвГ</text>
</g>
<g clip-path="url(#tc10)">
<text transform="translate(2928.43,195.00) scale(0.9339,1)" font-size="30.52" fill="#404040" font-style="italic" >АаБбВвГ</text>
</g>
<g clip-path="url(#tc11)">
<text transform="translate(3071.46,195.00) scale(0.9568,1)" font-size="30.52" fill="#156082" font-style="italic" >АаБбВвГ</text>
</g>
<rect x="3070" y="161.5" width="122" height="1.3" fill="#156082"/>
<rect x="3070" y="203.3" width="122" height="1.3" fill="#156082"/>
<g clip-path="url(#tc12)">
<text transform="translate(3214.00,195.00) scale(1.0300,1)" font-size="30.52" fill="#595959" style="font-variant:small-caps">АаБбВвГ</text>
</g>
<g clip-path="url(#tc13)">
<text transform="translate(3357.25,195.00) scale(0.9800,1)" font-size="30.52" fill="#156082" font-weight="bold" style="font-variant:small-caps">АаБбВвГ</text>
</g>
<rect x="3495" y="141.9" width="26" height="37.900000000000006" fill="#323130" />
<rect x="3495" y="184" width="26" height="33.900000000000006" fill="#323130" />
<rect x="3495" y="221.9" width="26" height="35.900000000000006" fill="#323130" />
<path d="M3502.5 163.3 L3508.05 157.3 L3513.6 163.3" stroke="#6a6a6a" stroke-width="2" fill="none" stroke-linecap="square"/>
<path d="M3502.5 198.7 L3508.05 204.7 L3513.6 198.7" stroke="#fff" stroke-width="2" fill="none" stroke-linecap="square"/>
<rect x="3500.8" y="232" width="14.4" height="2.2" fill="#fff" />
<path d="M3502.5 238 L3508.05 244 L3513.6 238" stroke="#fff" stroke-width="2" fill="none" stroke-linecap="square"/>
<text transform="translate(2451.97,311.00) scale(0.9799,1)" font-size="21.08" fill="#fff" >Стили</text>
<path d="M3521 310 V297 H3534 M3526 302 L3534.5 310.5 M3535 302 V311 H3526" stroke="#fff" stroke-width="2" fill="none" />
<rect x="0" y="2020" width="3839" height="2.5" fill="#3b3a39" />
<rect x="0" y="2064" width="3839" height="1" fill="#454443" />
<text transform="translate(12.97,2051.00) scale(0.9985,1)" font-size="20.64" fill="#fff" >Страница 1 из 1</text>
<text transform="translate(204.36,2051.00) scale(0.9912,1)" font-size="20.64" fill="#fff" >Число слов: 0</text>
<text transform="translate(371.57,2051.00) scale(1.0096,1)" font-size="20.64" fill="#fff" >английский (США)</text>
<circle cx="595.9" cy="2033.4" r="3.4" fill="none" stroke="#fff" stroke-width="2"/>
<path d="M591 2037.2 Q587 2035 585.5 2036.8 Q584.5 2039 587.5 2040 L590.5 2041.5 Q591.5 2044 591 2047 L589.5 2053 Q589 2056 591.5 2056.5 Q594 2056.5 593.5 2054" stroke="#fff" stroke-width="2" fill="none" stroke-linecap="round" stroke-linejoin="round"/>
<path d="M600.8 2037.2 Q604.5 2035 606.5 2036.8 Q608 2039 605 2040.5 L601 2042 V2045.5" stroke="#fff" stroke-width="2" fill="none" stroke-linecap="round" stroke-linejoin="round"/>
<path d="M597 2050 L603 2056 L613.4 2045.6" stroke="#fff" stroke-width="2" fill="none" />
<text transform="translate(616.95,2051.00) scale(1.0153,1)" font-size="20.64" fill="#fff" >Специальные возможности: все в порядке</text>
<path d="M3059.5 2034 V2029.5 H3064 M3082 2029.5 H3086.5 V2034 M3086.5 2051.5 V2056 H3082 M3064 2056 H3059.5 V2051.5" stroke="#fff" stroke-width="2" fill="none" />
<path d="M3065.8 2034.5 H3075 L3080.5 2040 V2052 H3065.8 Z M3075 2034.5 V2040 H3080.5" stroke="#fff" stroke-width="1.8" fill="none" />
<text transform="translate(3092.66,2051.60) scale(1.0075,1)" font-size="20.64" fill="#fff" >Фокусировка</text>
<path d="M3266.8 2030 H3276 Q3279 2030 3279 2033 V2054 Q3279 2051.5 3276 2051.5 H3266.8 Z M3291.3 2030 H3282 Q3279 2030 3279 2033 M3279 2054 Q3279 2051.5 3282 2051.5 H3291.3 V2030" stroke="#fff" stroke-width="1.8" fill="none" />
<rect x="3269.5" y="2034.1" width="6.5" height="1.8" fill="#fff" />
<rect x="3282" y="2034.1" width="6.5" height="1.8" fill="#fff" />
<rect x="3269.5" y="2038.6" width="6.5" height="1.8" fill="#fff" />
<rect x="3282" y="2038.6" width="6.5" height="1.8" fill="#fff" />
<rect x="3269.5" y="2043.1" width="6.5" height="1.8" fill="#fff" />
<rect x="3282" y="2043.1" width="6.5" height="1.8" fill="#fff" />
<rect x="3269.5" y="2047.1" width="6.5" height="1.8" fill="#fff" />
<rect x="3282" y="2047.1" width="6.5" height="1.8" fill="#fff" />
<rect x="3320" y="2022" width="80" height="43" fill="#5d5c5b" />
<rect x="3349" y="2030" width="20" height="25.7" fill="none" stroke="#fff" stroke-width="2"/>
<rect x="3352" y="2032.3" width="14" height="1.5" fill="#fff" />
<rect x="3352" y="2035.3999999999999" width="14" height="1.5" fill="#fff" />
<rect x="3352" y="2038.5" width="14" height="1.5" fill="#fff" />
<rect x="3352" y="2041.6" width="14" height="1.5" fill="#fff" />
<rect x="3352" y="2044.7" width="14" height="1.5" fill="#fff" />
<rect x="3352" y="2047.8" width="14" height="1.5" fill="#fff" />
<rect x="3352" y="2050.9" width="14" height="1.5" fill="#fff" />
<path d="M3440 2056 H3426.6 V2030 H3453 V2042" stroke="#fff" stroke-width="2" fill="none" />
<rect x="3430" y="2033.2" width="19" height="1.6" fill="#fff" />
<rect x="3430" y="2037.2" width="19" height="1.6" fill="#fff" />
<rect x="3430" y="2041.2" width="6" height="1.6" fill="#fff" />
<rect x="3430" y="2045.2" width="6" height="1.6" fill="#fff" />
<rect x="3430" y="2049.2" width="6" height="1.6" fill="#fff" />
<circle cx="3445.5" cy="2049.5" r="7.2" fill="none" stroke="#fff" stroke-width="1.8"/>
<ellipse cx="3445.5" cy="2049.5" rx="3" ry="7.2" fill="none" stroke="#fff" stroke-width="1.5"/>
<rect x="3438.3" y="2048.7" width="14.4" height="1.5" fill="#fff" />
<rect x="3491" y="2041.2" width="16" height="1.6" fill="#cfcfcf" />
<rect x="3518.8" y="2041.2" width="198" height="1.6" fill="#cfcfcf" />
<rect x="3613" y="2032" width="9.6" height="22" fill="#e8e8e8" />
<rect x="3727" y="2041.7" width="15.5" height="1.6" fill="#e8e8e8" />
<rect x="3734.5" y="2035" width="1.6" height="15.5" fill="#e8e8e8" />
<text transform="translate(3767.51,2051.60) scale(0.9601,1)" font-size="20.64" fill="#fff" >100 %</text>
</svg>
</body></html>
